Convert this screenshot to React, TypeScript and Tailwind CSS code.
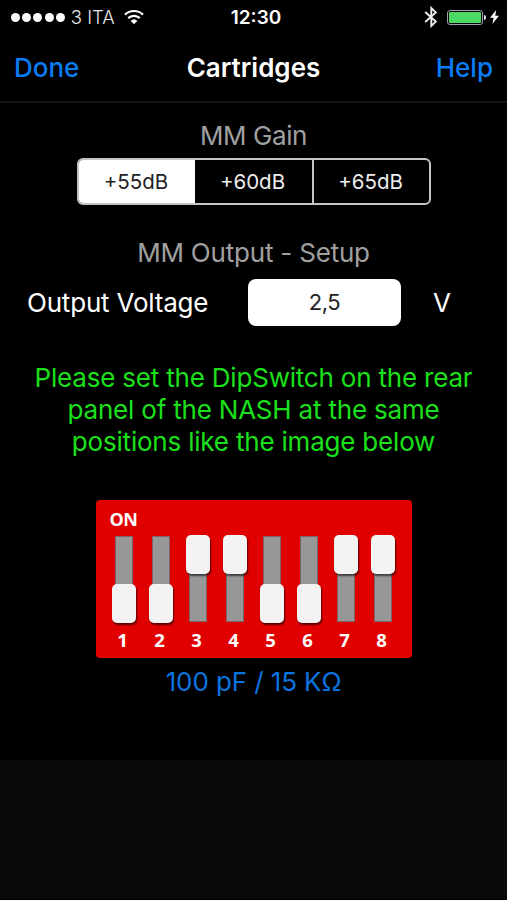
import React, { useState } from "react";
import clsx from "clsx";

interface DipSwitchProps {
  label: string;
  on: boolean;
}

const gains = ["+55dB", "+60dB", "+65dB"];

const switches: DipSwitchProps[] = [
  { label: "1", on: false },
  { label: "2", on: false },
  { label: "3", on: true },
  { label: "4", on: true },
  { label: "5", on: false },
  { label: "6", on: false },
  { label: "7", on: true },
  { label: "8", on: true },
];

const StatusBar = () => {
  return (
    <div className="grid h-[34px] grid-cols-3 items-center pl-[11px] pr-2 text-white">
      <div className="flex items-center">
        <div className="flex gap-[2.2px]">
          {[1, 2, 3, 4, 5].map((dot) => (
            <span key={dot} className="h-[9px] w-[9px] rounded-full bg-white" />
          ))}
        </div>
        <span className="ml-[6px] whitespace-nowrap text-[18.5px] font-light leading-none text-gray-200">
          3 ITA
        </span>
        <svg className="ml-[9px] h-4 w-5" viewBox="0 0 20 16" fill="none">
          <path d="M1 5.6a13 13 0 0 1 18 0" stroke="white" strokeWidth="2.2" />
          <path d="M4.2 9.1a8.4 8.4 0 0 1 11.6 0" stroke="white" strokeWidth="2.2" />
          <path d="M6.7 11.9a4.8 4.8 0 0 1 6.6 0L10 15.2z" fill="white" />
        </svg>
      </div>
      <span className="pt-px pl-[2px] text-center text-[19px] font-semibold leading-none">12:30</span>
      <div className="flex items-center justify-end">
        <svg className="h-[22px] w-[14px]" viewBox="0 0 14 22" fill="none">
          <path
            d="M1.2 6l10.6 9.6L7.3 20V2l4.5 4.4L1.2 16"
            stroke="#eee"
            strokeWidth="1.9"
          />
        </svg>
        <div className="ml-[9px] h-[15px] w-[36px] rounded-[3px] border border-gray-400 p-px">
          <div className="h-full w-full rounded-[1px] bg-[#4cd964]" />
        </div>
        <div className="ml-px h-[5px] w-[2px] rounded-r-full bg-gray-200" />
        <svg className="ml-1 h-[14px] w-[9px]" viewBox="0 0 9 14">
          <path d="M6.2 0L0 7.8h3.6L2.4 14 9 5.8H5.2z" fill="white" />
        </svg>
      </div>
    </div>
  );
};

const NavBar = () => {
  return (
    <div className="flex h-[69px] items-center justify-between border-b-2 border-[#121212] px-[14px] text-[26px] leading-none">
      <button className="w-[100px] text-left font-medium text-[#0a7cf5]">Done</button>
      <h1 className="pt-px font-semibold text-white">Cartridges</h1>
      <button className="w-[100px] text-right font-medium text-[#0a7cf5]">Help</button>
    </div>
  );
};

const DipSwitch = ({ label, on }: DipSwitchProps) => {
  return (
    <div className="flex w-[37px] flex-col items-center">
      <div className="grid h-[88px] place-items-center">
        <div className="col-start-1 row-start-1 h-[86px] w-[18px] border border-[#7d6462] bg-[#979797]" />
        <div
          className={clsx(
            "col-start-1 row-start-1 h-[39px] w-6 rounded-[5px] bg-[#f3f3f3] shadow-[1px_2px_2px_rgba(0,0,0,0.6)]",
            on ? "self-start" : "self-end"
          )}
        />
      </div>
      <span className="mt-[7px] pr-[3px] font-['Open_Sans',sans-serif] text-[18.5px] font-bold leading-5 text-white">
        {label}
      </span>
    </div>
  );
};

const App = () => {
  const [gain, setGain] = useState(gains[0]);

  return (
    <div className="flex h-[900px] w-[507px] flex-col border-b border-black bg-[#0a0a0a] font-['Inter',sans-serif]">
      <div className="flex h-[760px] flex-col bg-black">
        <StatusBar />
        <NavBar />

        <h2 className="mt-[17px] text-center text-[26px] leading-8 tracking-[-0.4px] text-[#a0a0a0]">
          MM Gain
        </h2>
        <div className="ml-[77px] mt-[6px] flex h-[47px] w-[354px] overflow-hidden rounded-[6px] border-2 border-[#c4c4c4]">
          {gains.map((item) => (
            <button
              key={item}
              onClick={() => setGain(item)}
              className={clsx(
                "w-[117px] border-[#c4c4c4] pr-[2px] pt-px text-[20.5px] first:w-[116px] last:border-l-2",
                gain === item ? "bg-white text-[#222]" : "text-[#eee]"
              )}
            >
              {item}
            </button>
          ))}
        </div>

        <h2 className="mt-8 text-center text-[26px] leading-8 tracking-[-0.2px] text-[#a0a0a0]">
          MM Output - Setup
        </h2>
        <div className="mt-[10px] flex h-[47px] items-center pl-[27px]">
          <span className="w-[221px] text-[26px] tracking-[-0.2px] text-white">Output Voltage</span>
          <div className="flex h-[47px] w-[153px] items-center justify-center rounded-[8px] bg-white text-[22px] tracking-[-0.5px] text-[#222]">
            2,5
          </div>
          <span className="ml-8 text-[26px] text-white">V</span>
        </div>

        <p className="mt-9 text-center text-[26px] leading-8 tracking-[-0.2px] text-[#1be01b]">
          Please set the DipSwitch on the rear
          <br />
          panel of the NASH at the same
          <br />
          positions like the image below
        </p>

        <div className="mx-auto mt-[42px] h-[158px] w-[316px] rounded-[4px] bg-[#e00000] pl-[10px] pt-[9px]">
          <div className="pl-1 font-['Open_Sans',sans-serif] text-[18px] font-bold leading-5 tracking-[-0.5px] text-white">
            ON
          </div>
          <div className="mt-[6px] flex">
            {switches.map((item) => (
              <DipSwitch key={item.label} {...item} />
            ))}
          </div>
        </div>

        <p className="mt-2 text-center text-[26px] leading-8 tracking-[-0.1px] text-[#0a74e0]">
          100 pF / 15 KΩ
        </p>
      </div>
    </div>
  );
};

export default App;
